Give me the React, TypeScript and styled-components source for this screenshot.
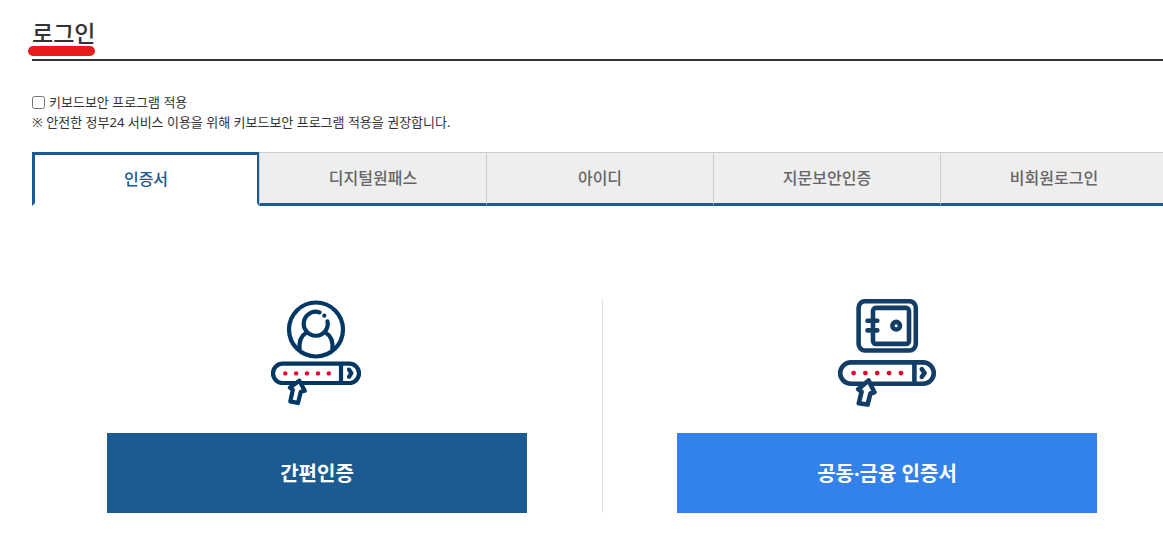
import React, { useState } from 'react';
import styled, { createGlobalStyle } from 'styled-components';

const GlobalStyle = createGlobalStyle`
  * { box-sizing: border-box; }
  body {
    margin: 0;
    overflow-x: hidden;
    background: #fff;
    color: #333;
    font-family: 'Noto Sans', 'Noto Sans CJK KR', sans-serif;
    font-size: 13px;
    line-height: 20px;
  }
`;

const Page = styled.main`
  margin: 0 -9px 0 32px;
  padding-top: 15px;
`;

const TitleBar = styled.header`
  height: 46px;
  border-bottom: 2px solid #333;
`;

const Title = styled.h1`
  position: relative;
  display: inline-block;
  margin: 0;
  font-size: 23px;
  font-weight: 500;
  line-height: 36px;
`;

const Marker = styled.span`
  position: absolute;
  left: -4px;
  right: 0;
  bottom: -5px;
  height: 10px;
  border-radius: 5px;
  background: #e71d1d;
`;

const Security = styled.div`
  padding: 31px 0 20px;
  font-weight: 400;
  color: #333;
`;

const CheckLabel = styled.label`
  display: flex;
  align-items: center;
  gap: 4px;
`;

const Checkbox = styled.input`
  width: 13px;
  height: 13px;
  margin: 0;
`;

const Note = styled.p`
  margin: 0;
`;

const TabList = styled.div`
  display: grid;
  grid-template-columns: repeat(5, 1fr);
  margin-right: 5px;
`;

const Tab = styled.button<{ $active: boolean }>`
  height: 54px;
  padding: 0;
  border-style: solid;
  border-width: ${(p) => (p.$active ? '3px 2px 3px 3px' : '1px 0 3px 1px')};
  border-color: ${(p) =>
    p.$active ? '#1c5a92 #1c5a92 #fff #1c5a92' : '#ccc #ccc #1c5a92 #ccc'};
  background: ${(p) => (p.$active ? '#fff' : '#eee')};
  color: ${(p) => (p.$active ? '#1c5a92' : '#666')};
  font-family: inherit;
  font-size: 16px;
  font-weight: 500;
  line-height: 24px;
  cursor: pointer;
`;

const Methods = styled.div`
  display: grid;
  grid-template-columns: 1fr 1fr;
  padding: 93px 0 46px;
`;

const Method = styled.section`
  display: flex;
  flex-direction: column;
  align-items: center;
  gap: 26px;

  & + & {
    box-shadow: inset 1px 0 #e1e1e1;
  }
`;

const MethodIcon = styled.svg`
  display: block;
  width: 100px;
  height: 108px;
`;

const MethodButton = styled.button<{ $tone: string }>`
  width: 420px;
  max-width: 90%;
  height: 80px;
  padding: 2px 0 0;
  border: 0;
  background: ${(p) => p.$tone};
  color: #fff;
  font-family: inherit;
  font-size: 20px;
  font-weight: 700;
  line-height: 30px;
  cursor: pointer;
`;

const tabs = ['인증서', '디지털원패스', '아이디', '지문보안인증', '비회원로그인'];

function PersonIcon() {
  return (
    <MethodIcon viewBox="0 0 100 108" fill="none" stroke="#003764" strokeWidth="4.2" aria-hidden="true">
      <circle cx="49" cy="30.5" r="27" />
      <path d="M52.6 13.4A12 12 0 1 0 60.5 22.4" strokeLinecap="round" />
      <path d="M39.5 33.5C34.5 36.5 31.5 42 32.8 51M58.5 33.5C63.5 36.5 66.5 42 65.2 51" />
      <circle cx="57.3" cy="16.7" r="2.1" fill="#003764" stroke="none" />
      <rect x="6" y="64.6" width="86" height="19.4" rx="9.7" />
      <path d="M74 65v19" />
      <path d="M82 70.6 84.4 74.2 82 77.8" strokeLinecap="round" strokeLinejoin="round" />
      <g fill="#e6002d" stroke="none">
        {[18.3, 29.1, 40, 51, 61.8].map((x) => (
          <circle key={x} cx={x} cy="74.4" r="2.2" />
        ))}
      </g>
      <path
        d="M32.3 81.7 37.8 91.8 33.8 92.7 31 104 23.3 102.4 25.8 90.8 22.8 88.6Z"
        fill="#fff"
        strokeLinejoin="round"
      />
    </MethodIcon>
  );
}

function SafeIcon() {
  return (
    <MethodIcon viewBox="0 0 100 108" fill="none" stroke="#143d66" strokeWidth="4.6" aria-hidden="true">
      <rect x="21.6" y="2.2" width="57.2" height="49.3" rx="6.5" />
      <rect x="36" y="8.9" width="36" height="36" rx="3" />
      <path d="M30.5 21.7h9.8M30.5 31.4h9.8" strokeLinecap="round" />
      <circle cx="59.2" cy="26.7" r="3.8" />
      <rect x="3.2" y="63.4" width="93.6" height="21.4" rx="10.7" />
      <path d="M77.4 63v22" />
      <path d="M84.8 70.2 87.6 74 84.8 77.8" strokeLinecap="round" strokeLinejoin="round" />
      <g fill="#e6002d" stroke="none">
        {[16.6, 28.4, 40.2, 52.1, 64].map((x) => (
          <circle key={x} cx={x} cy="74.1" r="2.4" />
        ))}
      </g>
      <path
        d="M31.6 81.4 37.4 93.2 33.4 94.5 30.6 105.6 21.8 104.2 24.6 92.8 21.2 90.2Z"
        fill="#fff"
        strokeLinejoin="round"
      />
    </MethodIcon>
  );
}

export default function App() {
  const [active, setActive] = useState(0);

  return (
    <>
      <GlobalStyle />
      <Page>
        <TitleBar>
          <Title>
            로그인
            <Marker />
          </Title>
        </TitleBar>
        <Security>
          <CheckLabel>
            <Checkbox type="checkbox" />
            키보드보안 프로그램 적용
          </CheckLabel>
          <Note>※ 안전한 정부24 서비스 이용을 위해 키보드보안 프로그램 적용을 권장합니다.</Note>
        </Security>
        <TabList role="tablist">
          {tabs.map((name, i) => (
            <Tab
              key={name}
              type="button"
              role="tab"
              aria-selected={i === active}
              $active={i === active}
              onClick={() => setActive(i)}
            >
              {name}
            </Tab>
          ))}
        </TabList>
        <Methods>
          <Method>
            <PersonIcon />
            <MethodButton type="button" $tone="#1c5a92">간편인증</MethodButton>
          </Method>
          <Method>
            <SafeIcon />
            <MethodButton type="button" $tone="#3282e9">공동·금융 인증서</MethodButton>
          </Method>
        </Methods>
      </Page>
    </>
  );
}
